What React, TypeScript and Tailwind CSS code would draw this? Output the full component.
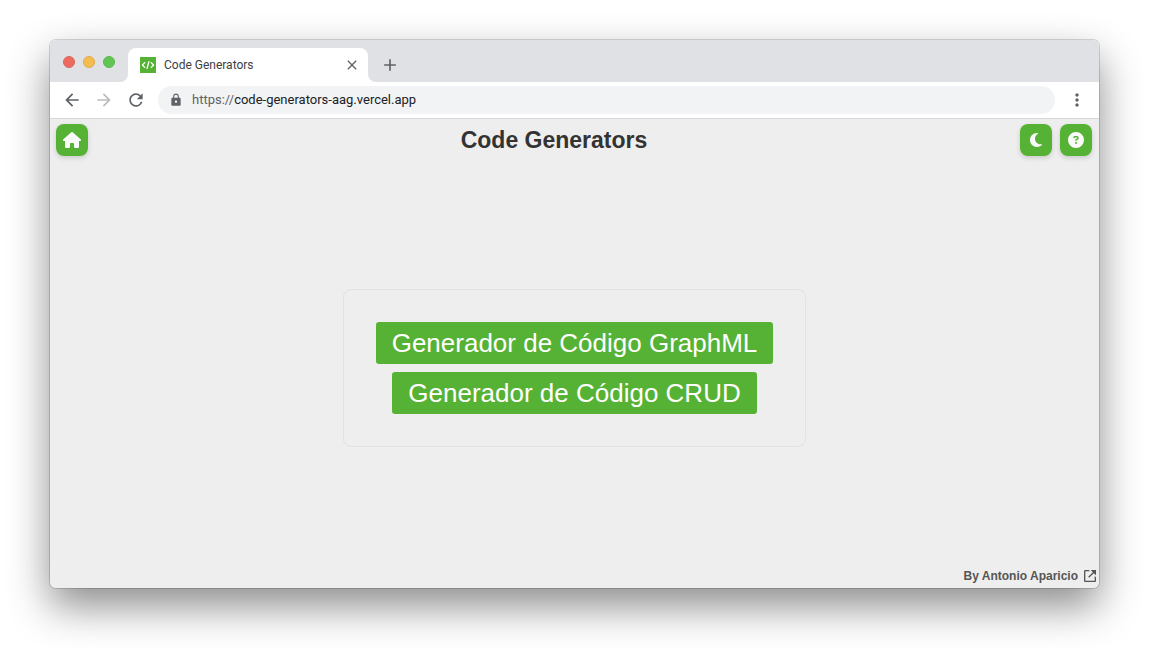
import { FaCircleQuestion, FaHouse, FaMoon } from "react-icons/fa6";
import { BiLinkExternal } from "react-icons/bi";
import { MdArrowBack, MdArrowForward, MdRefresh, MdLock, MdMoreVert, MdClose, MdAdd } from "react-icons/md";

const iconButton =
  "flex size-8 items-center justify-center rounded-lg bg-[#56b235] text-[#fafafa] shadow-[0_2px_5px_rgba(0,0,0,0.15)]";
const generatorLink =
  "rounded-[3px] bg-[#56b235] px-4 text-[26px] leading-[42px] whitespace-nowrap text-white";

function CodeIcon() {
  return (
    <svg viewBox="0 0 16 16" className="size-4" aria-hidden="true">
      <rect width="16" height="16" fill="#56b235" />
      <path
        d="M4.800 5.600 2.400 8l2.400 2.400M11.200 5.600 13.600 8l-2.400 2.400M8.900 4.600 7.100 11.400"
        fill="none"
        stroke="#fff"
        strokeWidth="1.300"
        strokeLinecap="round"
        strokeLinejoin="round"
      />
    </svg>
  );
}

function TabStrip() {
  return (
    <div className="flex h-[42px] bg-white">
      <div className="flex w-[78px] gap-2 rounded-br-lg bg-[#dfe1e5] pt-4 pl-[13px]">
        <button aria-label="Close window" className="size-3 rounded-full border border-[#d9655b] bg-[#ed6a5e]" />
        <button aria-label="Minimize window" className="size-3 rounded-full border border-[#dfa94b] bg-[#f5bd4f]" />
        <button aria-label="Zoom window" className="size-3 rounded-full border border-[#58b94b] bg-[#61c554]" />
      </div>
      <div className="mb-2 w-60 bg-[#dfe1e5] pt-2">
        <div className="flex h-[34px] items-center rounded-t-lg bg-white px-3 text-[#3c4043]">
          <CodeIcon />
          <span className="ml-2 flex-1 text-[12px]">Code Generators</span>
          <button aria-label="Close tab" className="-mr-1 text-[#5f6368]">
            <MdClose size={16} />
          </button>
        </div>
      </div>
      <div className="flex flex-1 rounded-bl-lg bg-[#dfe1e5] pt-2 pl-3">
        <button aria-label="New tab" className="text-[#5f6368]">
          <MdAdd size={20} />
        </button>
      </div>
    </div>
  );
}

function Toolbar() {
  return (
    <div className="flex h-[37px] items-center border-b border-[#d5d7da] bg-white px-3 text-[#5f6368]">
      <div className="flex gap-3">
        <button aria-label="Back"><MdArrowBack size={20} /></button>
        <button aria-label="Forward" className="text-[#babcbe]"><MdArrowForward size={20} /></button>
        <button aria-label="Reload"><MdRefresh size={20} /></button>
      </div>
      <div className="mx-3 flex h-7 flex-1 items-center rounded-full bg-[#f1f3f4] px-[11px]">
        <MdLock size={14} />
        <span className="ml-[9px] text-[13px]">
          https://<span className="text-[#202124]">code-generators-aag.vercel.app</span>
        </span>
      </div>
      <button aria-label="Menu"><MdMoreVert size={20} /></button>
    </div>
  );
}

export default function App() {
  return (
    <div className="flex min-h-screen bg-white px-[50px] pt-10 pb-[60px] font-['Roboto',sans-serif]">
      <div className="flex flex-1 flex-col overflow-hidden rounded-md shadow-[0_0_0_1px_rgba(0,0,0,0.15),0_18px_42px_rgba(0,0,0,0.46)]">
        <TabStrip />
        <Toolbar />
        <div className="flex flex-1 flex-col bg-[#eee] font-['Liberation_Sans',Arial,sans-serif]">
          <header className="flex items-start justify-between pt-[5px] pr-[7px] pl-[6px]">
            <button aria-label="Inicio" className={iconButton}><FaHouse size={18} /></button>
            <h1 className="text-[23px] leading-8 font-bold text-[#333]">Code Generators</h1>
            <div className="flex gap-2">
              <button aria-label="Modo oscuro" className={iconButton}><FaMoon size={16} /></button>
              <button aria-label="Ayuda" className={iconButton}><FaCircleQuestion size={16} /></button>
            </div>
          </header>
          <main className="flex flex-1 items-center justify-center pt-3">
            <nav className="flex flex-col items-center gap-2 rounded-lg border border-[#e2e2e2] p-8">
              <a href="#graphml" className={generatorLink}>Generador de Código GraphML</a>
              <a href="#crud" className={generatorLink}>Generador de Código CRUD</a>
            </nav>
          </main>
          <footer className="flex justify-end px-px pb-1 text-[#555]">
            <a href="#author" className="flex items-center gap-1 text-[12px] leading-4 font-bold">
              By Antonio Aparicio <BiLinkExternal size={16} />
            </a>
          </footer>
        </div>
      </div>
    </div>
  );
}
